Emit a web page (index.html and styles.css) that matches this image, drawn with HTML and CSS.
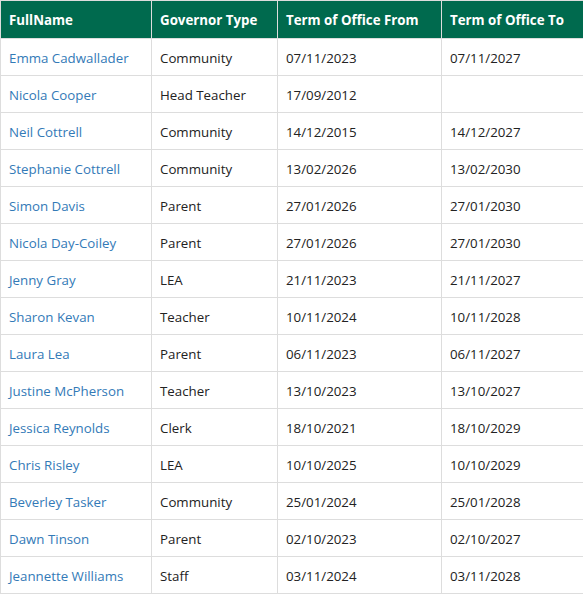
FILE: index.html
```html
<!DOCTYPE html>
<html>
<head>
<meta charset="utf-8">
<link rel="stylesheet" href="styles.css">
</head>
<body>
<table class="gov">
<thead>
<tr><th class="c1">FullName</th><th class="c2">Governor Type</th><th class="c3">Term of Office From</th><th class="c4">Term of Office To</th></tr>
</thead>
<tbody>
<tr><td><a href="#">Emma Cadwallader</a></td><td>Community</td><td>07/11/2023</td><td>07/11/2027</td></tr>
<tr><td><a href="#">Nicola Cooper</a></td><td>Head Teacher</td><td>17/09/2012</td><td></td></tr>
<tr><td><a href="#">Neil Cottrell</a></td><td>Community</td><td>14/12/2015</td><td>14/12/2027</td></tr>
<tr><td><a href="#">Stephanie Cottrell</a></td><td>Community</td><td>13/02/2026</td><td>13/02/2030</td></tr>
<tr><td><a href="#">Simon Davis</a></td><td>Parent</td><td>27/01/2026</td><td>27/01/2030</td></tr>
<tr><td><a href="#">Nicola Day-Coiley</a></td><td>Parent</td><td>27/01/2026</td><td>27/01/2030</td></tr>
<tr><td><a href="#">Jenny Gray</a></td><td>LEA</td><td>21/11/2023</td><td>21/11/2027</td></tr>
<tr><td><a href="#">Sharon Kevan</a></td><td>Teacher</td><td>10/11/2024</td><td>10/11/2028</td></tr>
<tr><td><a href="#">Laura Lea</a></td><td>Parent</td><td>06/11/2023</td><td>06/11/2027</td></tr>
<tr><td><a href="#">Justine McPherson</a></td><td>Teacher</td><td>13/10/2023</td><td>13/10/2027</td></tr>
<tr><td><a href="#">Jessica Reynolds</a></td><td>Clerk</td><td>18/10/2021</td><td>18/10/2029</td></tr>
<tr><td><a href="#">Chris Risley</a></td><td>LEA</td><td>10/10/2025</td><td>10/10/2029</td></tr>
<tr><td><a href="#">Beverley Tasker</a></td><td>Community</td><td>25/01/2024</td><td>25/01/2028</td></tr>
<tr><td><a href="#">Dawn Tinson</a></td><td>Parent</td><td>02/10/2023</td><td>02/10/2027</td></tr>
<tr><td><a href="#">Jeannette Williams</a></td><td>Staff</td><td>03/11/2024</td><td>03/11/2028</td></tr>
</tbody>
</table>
</body>
</html>
```
FILE: styles.css
```css
html, body { margin: 0; padding: 0; background: #fff; }
body { font-family: "Open Sans", "Noto Sans", sans-serif; font-size: 13.3px; font-weight: 500; color: #222; }
.gov { border-collapse: collapse; width: 584px; table-layout: fixed; }
.gov th, .gov td { border: 1px solid #ddd; padding: 0 8px; text-align: left; white-space: nowrap; }
.gov th { background: #006a4e; color: #fff; font-weight: 700; height: 37px; border-color: #ddd; }
.gov td { height: 34px; padding-top: 2px; }
.c1 { width: 134px; }
.c2 { width: 109px; }
.c3 { width: 147px; }
.gov a { color: #337ab7; text-decoration: none; }
```
